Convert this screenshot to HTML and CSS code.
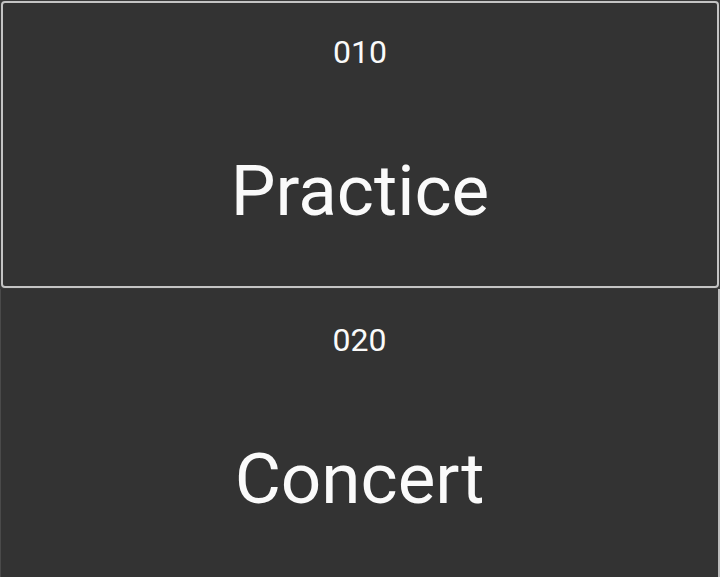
FILE: index.html
```html
<!DOCTYPE html>
<html>
<head>
<meta charset="utf-8">
<link rel="stylesheet" href="styles.css">
</head>
<body>
<div class="list">
  <div class="card card-selected">
    <div class="num">010</div>
    <div class="title">Practice</div>
  </div>
  <div class="card card-plain">
    <div class="num">020</div>
    <div class="title">Concert</div>
  </div>
</div>
</body>
</html>
```

FILE: styles.css
```css
html, body {
  margin: 0;
  padding: 0;
  background: #3a3a3a;
  width: 720px;
  height: 577px;
  overflow: hidden;
}
.list {
  display: flex;
  flex-direction: column;
  font-family: Roboto, "Noto Sans", sans-serif;
  color: #fafafa;
}
.card {
  box-sizing: border-box;
  background: #333333;
  display: flex;
  flex-direction: column;
  align-items: center;
}
.card-selected {
  margin: 1px 1px 0 1px;
  height: 287px;
  border: 2px solid #c4c4c4;
  border-radius: 4px;
  padding-top: 30px;
}
.card-plain {
  margin-top: 1px;
  height: 289px;
  border-left: 1px solid #4a4a4a;
  border-right: 2px solid #bdbdbd;
  padding-top: 32px;
}
.num {
  font-size: 32px;
  line-height: 38px;
}
.title {
  font-size: 71px;
  line-height: 90px;
  margin-top: 75px;
}
```
